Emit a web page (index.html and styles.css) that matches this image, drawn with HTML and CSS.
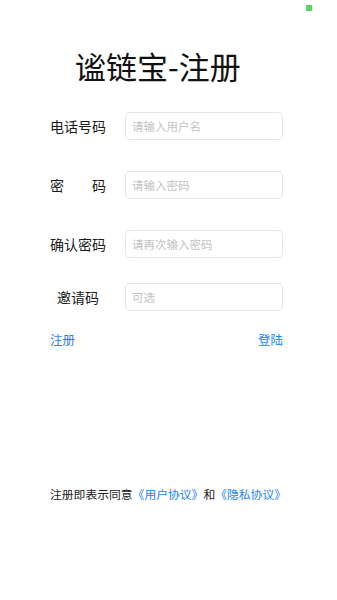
FILE: index.html
```html
<!DOCTYPE html>
<html lang="zh-CN">
<head>
    <meta charset="UTF-8">
    <meta name="viewport" content="width=device-width, initial-scale=1.0">
    <title>谧链宝-注册</title>
    <link rel="stylesheet" href="styles.css">
</head>
<body>

    <div id="statusbar">
        <span class="dot"></span>
    </div>

    <h1 id="title">谧链宝-注册</h1>

    <div id="form">
        <div class="row">
            <label class="label">电话号码</label>
            <input type="text" class="field" placeholder="请输入用户名">
        </div>
        <div class="row">
            <label class="label spread"><span>密</span><span>码</span></label>
            <input type="password" class="field" placeholder="请输入密码">
        </div>
        <div class="row">
            <label class="label">确认密码</label>
            <input type="password" class="field" placeholder="请再次输入密码">
        </div>
        <div class="row row-last">
            <label class="label">邀请码</label>
            <input type="text" class="field" placeholder="可选">
        </div>

        <div id="actions">
            <a class="link" href="#">注册</a>
            <a class="link" href="#">登陆</a>
        </div>
    </div>

    <div id="agreement">
        注册即表示同意<a class="link" href="#">《用户协议》</a>和<a class="link" href="#">《隐私协议》</a>
    </div>

</body>
</html>
```

FILE: styles.css
```css
body {
    font-family: "Noto Sans CJK SC", "Noto Sans", sans-serif;
    background-color: #ffffff;
    color: #1a1a1a;
    margin: 0;
    padding: 0;
    width: 337px;
    height: 600px;
    overflow: hidden;
}

#statusbar {
    height: 16px;
    display: flex;
    justify-content: flex-end;
    padding-right: 25px;
}

.dot {
    width: 6px;
    height: 6px;
    margin-top: 5px;
    background-color: #4cd964;
}

#title {
    margin: 0;
    padding-top: 28px;
    padding-left: 75px;
    font-size: 31px;
    font-weight: normal;
    line-height: 44px;
    color: #111111;
}

#form {
    padding: 0 54px 0 50px;
    margin-top: 24px;
}

.row {
    display: flex;
    align-items: center;
    height: 28px;
    margin-bottom: 31px;
}

.row-last {
    margin-bottom: 0;
}

.row:nth-child(3) {
    margin-bottom: 25px;
}

.label {
    flex: none;
    width: 56px;
    margin-right: 19px;
    font-size: 14px;
    white-space: nowrap;
    text-align: center;
    color: #1a1a1a;
}

.spread {
    display: flex;
    justify-content: space-between;
}

.field {
    flex: 1;
    min-width: 0;
    box-sizing: border-box;
    height: 28px;
    padding: 0 6px;
    border: 1px solid #e6e6e6;
    border-radius: 5px;
    font-family: "Noto Sans CJK SC", sans-serif;
    font-size: 11.5px;
    outline: none;
}

.field::placeholder {
    color: #c2c2c2;
}

#actions {
    display: flex;
    justify-content: space-between;
    margin-top: 19px;
    font-size: 12.5px;
}

.link {
    color: #1a82f7;
    text-decoration: none;
}

#agreement {
    margin-top: 136px;
    padding-left: 50px;
    font-size: 11.8px;
    white-space: nowrap;
    color: #1a1a1a;
}
```
